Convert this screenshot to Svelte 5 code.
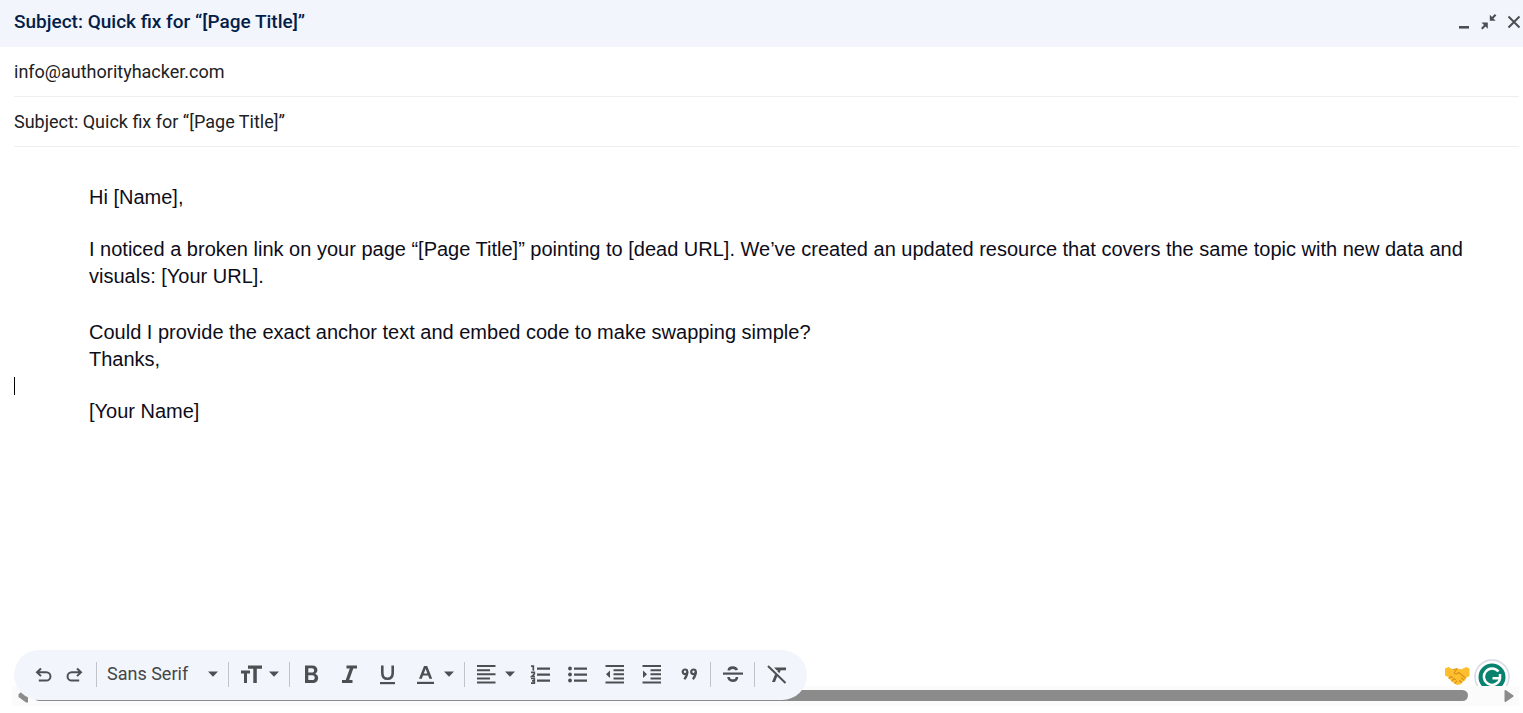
<script>
  let recipient = $state('info@authorityhacker.com');
  let subject = $state('Subject: Quick fix for “[Page Title]”');
</script>

{#snippet caret()}
  <svg class="caret" viewBox="0 0 12 6" aria-hidden="true"><path d="M1 0.500h10L6 5.800z" /></svg>
{/snippet}

<main class="compose">
  <header class="titlebar">
    <h1>{subject}</h1>
    <div class="window-actions">
      <button aria-label="Minimize">
        <svg viewBox="0 0 18 18"><path d="M4 13h10v2.600H4z" /></svg>
      </button>
      <button aria-label="Exit full screen">
        <svg viewBox="0 0 18 18"><path d="M9.800 1.800l2.200 2.200 2.800-3 1.600 1.500-3 2.900 2.300 2.300H9.800zM1.500 9.500h6.300v6.200l-2.300-2.200-3 3L1 15l3-3z" /></svg>
      </button>
      <button aria-label="Close">
        <svg viewBox="0 0 18 18"><path class="line" d="M3.500 3.500l11 11M14.500 3.500l-11 11" /></svg>
      </button>
    </div>
  </header>

  <div class="fields">
    <input aria-label="To recipients" type="email" bind:value={recipient} />
    <input aria-label="Subject" type="text" bind:value={subject} />
  </div>

  <div class="message" role="textbox" aria-label="Message body" aria-multiline="true" tabindex="0">
    <div class="quote">
      <p>Hi [Name],</p>
      <p class="long">I noticed a broken link on your page “[Page Title]” pointing to [dead URL]. We’ve created an updated resource that covers the same topic with new data and visuals: [Your URL].</p>
      <p>Could I provide the exact anchor text and embed code to make swapping simple?<br />Thanks,</p>
    </div>
    <div class="cursor-line"><span class="cursor"></span></div>
    <div class="quote"><p>[Your Name]</p></div>
  </div>

  <footer>
    <div class="extensions">
      <svg class="handshake" viewBox="0 0 26 20" aria-label="Handshake" role="img">
        <path fill="#fdbf2d" d="M1 2.500L4.500 1l4.500 2.500L13 2.500l4.500.8L22 1l3.500 1.500v7.500l-3 1.500-1 2-5.500 5-3 .5-5.500-3.500L4 11 1 9.500z" />
        <path fill="none" stroke="#d9901a" stroke-width="1.100" stroke-linecap="round" stroke-linejoin="round" d="M9 3.500l4-.8-3 4.500c1.500 1.300 3.500.6 4.800-.7l6.500 5.500M5 12.500l2-2 1.500 1M8 14.800l2-2.300 1.300 1M11 17.300l1.700-2.100M15.500 14.500l2 2M17.500 12l2.500 2.200" />
      </svg>
      <svg class="grammar" viewBox="0 0 36 27" aria-label="Grammarly" role="img">
        <circle cx="18" cy="18" r="17" fill="#fff" stroke="#d5d9e3" stroke-width="1.500" />
        <circle cx="18" cy="18" r="13.500" fill="#08826f" />
        <path fill="none" stroke="#fff" stroke-width="2.500" d="M24.500 12.500A8.200 8.200 0 1 0 26 20M18.500 19.200h8M26 15v5" />
      </svg>
    </div>
    <div class="scrollbar" aria-hidden="true">
      <svg class="arrow-left" viewBox="0 0 10 14"><path d="M0.500 5.500L3 3l7 5v5.500H8L0.500 8z" /></svg>
      <div class="thumb"></div>
      <svg class="arrow-right" viewBox="0 0 10 14"><path d="M0.500 2Q0.500.5 2 1.300L9.500 6.500v1L2 12.800Q.5 13.500.5 12z" /></svg>
    </div>

    <div class="toolbar" role="toolbar" aria-label="Formatting options">
      <div class="group history">
        <button aria-label="Undo">
          <svg viewBox="0 0 25 25"><path class="thin" d="M10 6.500L6 10.300l4 3.800M6.300 10.300h9a4.100 4.100 0 0 1 0 8.300H7.800" /></svg>
        </button>
        <button aria-label="Redo">
          <svg viewBox="0 0 25 25"><path class="thin" d="M15 6.500l4 3.800-4 3.800M18.700 10.300h-9a4.100 4.100 0 0 0 0 8.300h7.500" /></svg>
        </button>
      </div>
      <div class="font">
        <select aria-label="Font"><option>Sans Serif</option></select>
        {@render caret()}
      </div>
      <div class="group">
        <button class="menu" aria-label="Size">
          <svg viewBox="0 0 25 25"><path d="M10 3.500h14v3.300h-5.200V21h-3.500V6.800H10zM3 8.500h9v3H9V21H6v-9.500H3z" /></svg>
          {@render caret()}
        </button>
      </div>
      <div class="group format">
        <button aria-label="Bold">
          <svg viewBox="0 0 25 25"><path fill-rule="evenodd" d="M6 3.500h7.400c3 0 5 1.800 5 4.600 0 1.700-.9 3-2.200 3.700 1.800.7 2.900 2.200 2.900 4.200 0 3.100-2.200 5-5.400 5H6zM9.300 6.300v4.200h3.600c1.400 0 2.200-.8 2.200-2.100s-.8-2.100-2.200-2.100zM9.300 13.300v4.800h4c1.600 0 2.400-.9 2.400-2.400s-.8-2.400-2.400-2.400z" /></svg>
        </button>
        <button aria-label="Italic">
          <svg viewBox="0 0 25 25"><path d="M9.500 3.500H20v3h-3.700L12.200 18h3.300v3H5v-3h3.700l4.100-11.500H9.500z" /></svg>
        </button>
        <button aria-label="Underline">
          <svg viewBox="0 0 25 25"><path class="strong" d="M7.300 3.500v7.200c0 4 1.800 6.100 5.200 6.100s5.200-2.100 5.200-6.100V3.500" /><path d="M5 20h15v2.200H5z" /></svg>
        </button>
        <button class="menu" aria-label="Text color">
          <svg viewBox="0 0 25 25"><path fill-rule="evenodd" d="M11 4h3.200l5 12.800h-2.800l-1.200-3.200H10l-1.200 3.200H6zm1.600 2.800L10.800 11.400h3.600z" /><path d="M4 19.800h17V22H4z" /></svg>
          {@render caret()}
        </button>
      </div>
      <div class="group lists">
        <button class="menu" aria-label="Align">
          <svg viewBox="0 0 25 25"><path d="M3 3h18.500v2H3zM3 7.200h13v2H3zM3 11.300h18.500v2H3zM3 15.500h13v2H3zM3 19.500h18.500v2H3z" /></svg>
          {@render caret()}
        </button>
        <button aria-label="Numbered list">
          <svg viewBox="0 0 25 25"><path d="M9 5.500h13v2.200H9zM9 11.500h13v2.200H9zM9 17.500h13v2.200H9z" /><path fill="none" stroke="#4d5052" stroke-width="1.700" d="M3 4.200h2.300v4.600M3 10.300h3.300v1.700L3.800 14.500H7M3 16.500h3.300v4.700H3M4 18.800h2" /></svg>
        </button>
        <button aria-label="Bulleted list">
          <svg viewBox="0 0 25 25"><circle cx="5" cy="6.500" r="1.900" /><circle cx="5" cy="12.500" r="1.900" /><circle cx="5" cy="18.500" r="1.900" /><path d="M9 5.500h13v2.200H9zM9 11.500h13v2.200H9zM9 17.500h13v2.200H9z" /></svg>
        </button>
        <button aria-label="Indent less">
          <svg viewBox="0 0 25 25"><path d="M3.500 3H22v2H3.500zM11.500 7.200H22v2H11.500zM11.500 11.300H22v2H11.500zM11.500 15.500H22v2H11.500zM3.500 19.500H22v2H3.500zM8 8.500v7.500l-4-3.700z" /></svg>
        </button>
        <button aria-label="Indent more">
          <svg viewBox="0 0 25 25"><path d="M3.500 3H22v2H3.500zM11.500 7.200H22v2H11.500zM11.500 11.300H22v2H11.500zM11.500 15.500H22v2H11.500zM3.500 19.500H22v2H3.500zM4 8.500v7.500l4-3.700z" /></svg>
        </button>
        <button aria-label="Quote">
          <svg viewBox="0 0 25 25"><g fill="none" stroke="#4d5052" stroke-width="2.200"><circle cx="9" cy="9.800" r="2.300" /><path d="M11.300 9.800c0 3-1 5.500-3 7.500" /><circle cx="17.500" cy="9.800" r="2.300" /><path d="M19.800 9.800c0 3-1 5.500-3 7.500" /></g></svg>
        </button>
      </div>
      <div class="group">
        <button aria-label="Strikethrough">
          <svg viewBox="0 0 25 25"><path d="M3 10.500h20v2.200H3z" /><path class="strong" d="M16.800 8.200c-.5-1.800-1.900-2.600-4-2.600-2.300 0-3.900 1-4 2.900M8.500 15c.2 2.300 1.800 3.600 4.300 3.600 2.600 0 4.200-1.200 4.100-3.600" /></svg>
        </button>
      </div>
      <div class="group">
        <button aria-label="Remove formatting">
          <svg viewBox="0 0 25 25"><path d="M10 5.500h12v2.800h-5.300l-1.300 3-2.100-2 .4-1H12.700zM11.200 12l2.200 2.100L11 20H8z" /><path class="thin" d="M4 4l17.500 17" /></svg>
        </button>
      </div>
    </div>
  </footer>
</main>

<style>
  :global(body) {
    margin: 0;
    background: #fff;
  }
  .compose {
    min-height: 100vh;
    display: flex;
    flex-direction: column;
    font-family: Roboto, "Liberation Sans", sans-serif;
    font-size: 18px;
    color: #202124;
  }
  .titlebar {
    display: flex;
    align-items: center;
    justify-content: space-between;
    height: 47px;
    padding-left: 14px;
    background: #f2f5fc;
    color: #041e49;
  }
  h1 {
    margin: 0;
    padding-bottom: 4px;
    font-size: 19px;
    line-height: 24px;
    font-weight: 500;
  }
  .window-actions {
    display: flex;
    gap: 7px;
    margin-bottom: 3px;
  }
  button {
    display: flex;
    align-items: center;
    padding: 0;
    border: 0;
    background: none;
    color: inherit;
    cursor: pointer;
  }
  svg {
    display: block;
    fill: #4d5052;
  }
  .window-actions svg {
    width: 18px;
    height: 18px;
  }
  .line,
  .thin,
  .strong {
    fill: none;
    stroke: #4d5052;
    stroke-width: 2;
  }
  .strong {
    stroke-width: 2.600;
  }
  .fields {
    display: flex;
    flex-direction: column;
    padding: 0 4px 0 14px;
  }
  input {
    box-sizing: border-box;
    height: 50px;
    padding: 0;
    border: 0;
    border-bottom: 1px solid #eceff1;
    outline: 0;
    background: none;
    color: inherit;
    font: inherit;
  }
  .message {
    flex: 1;
    padding: 37px 14px 0;
    outline: 0;
    font-family: "Liberation Sans", Arial, sans-serif;
    font-size: 20px;
    line-height: 27px;
    color: #0d0d1a;
  }
  .quote {
    padding: 0 32px 0 75px;
  }
  p {
    margin: 0;
  }
  p + p {
    margin-top: 25px;
  }
  .long + p {
    margin-top: 29px;
  }
  .cursor-line {
    display: flex;
    align-items: center;
    height: 25px;
  }
  .cursor {
    width: 1px;
    height: 18px;
    background: #000;
  }
  footer {
    display: grid;
    grid-template-rows: 56px;
    padding: 0 4px 7px 12px;
  }
  .extensions,
  .scrollbar,
  .toolbar {
    grid-area: 1 / 1;
  }
  .extensions {
    display: flex;
    align-items: flex-end;
    justify-self: end;
    align-self: start;
    gap: 4px;
    height: 36px;
    padding-right: 9px;
  }
  .handshake {
    width: 26px;
    height: 20px;
  }
  .grammar {
    width: 36px;
    height: 27px;
  }
  .scrollbar {
    align-self: end;
    display: flex;
    align-items: center;
    height: 20px;
    padding: 0 5px 1px 6px;
    box-sizing: border-box;
    background: #fbfbfb;
  }
  .scrollbar svg {
    width: 10px;
    height: 14px;
    fill: #8b8b8b;
  }
  .thumb {
    flex: 1;
    height: 11px;
    margin: 0 36px 0 6px;
    border-radius: 6px;
    background: #8b8b8b;
  }
  .toolbar {
    z-index: 1;
    justify-self: start;
    align-self: start;
    display: flex;
    align-items: center;
    box-sizing: border-box;
    height: 50px;
    margin-left: 2px;
    padding: 0 18px 2px 17px;
    border-radius: 25px;
    background: #f2f5fc;
    color: #444746;
  }
  .toolbar > * + * {
    margin-left: 9px;
    padding-left: 9px;
    border-left: 1px solid #c0c4ca;
  }
  .group {
    display: flex;
    align-items: center;
    height: 25px;
  }
  .group svg {
    width: 25px;
    height: 25px;
  }
  .toolbar .caret {
    width: 12px;
    height: 6px;
  }
  .menu {
    gap: 5px;
  }
  .history {
    gap: 6px;
  }
  .format {
    gap: 13px;
  }
  .lists {
    gap: 12px;
  }
  .font {
    display: flex;
    align-items: center;
    height: 25px;
  }
  select {
    width: 101px;
    height: 25px;
    padding: 0 0 2px 1px;
    border: 0;
    appearance: none;
    background: none;
    color: inherit;
    font: inherit;
  }
</style>
